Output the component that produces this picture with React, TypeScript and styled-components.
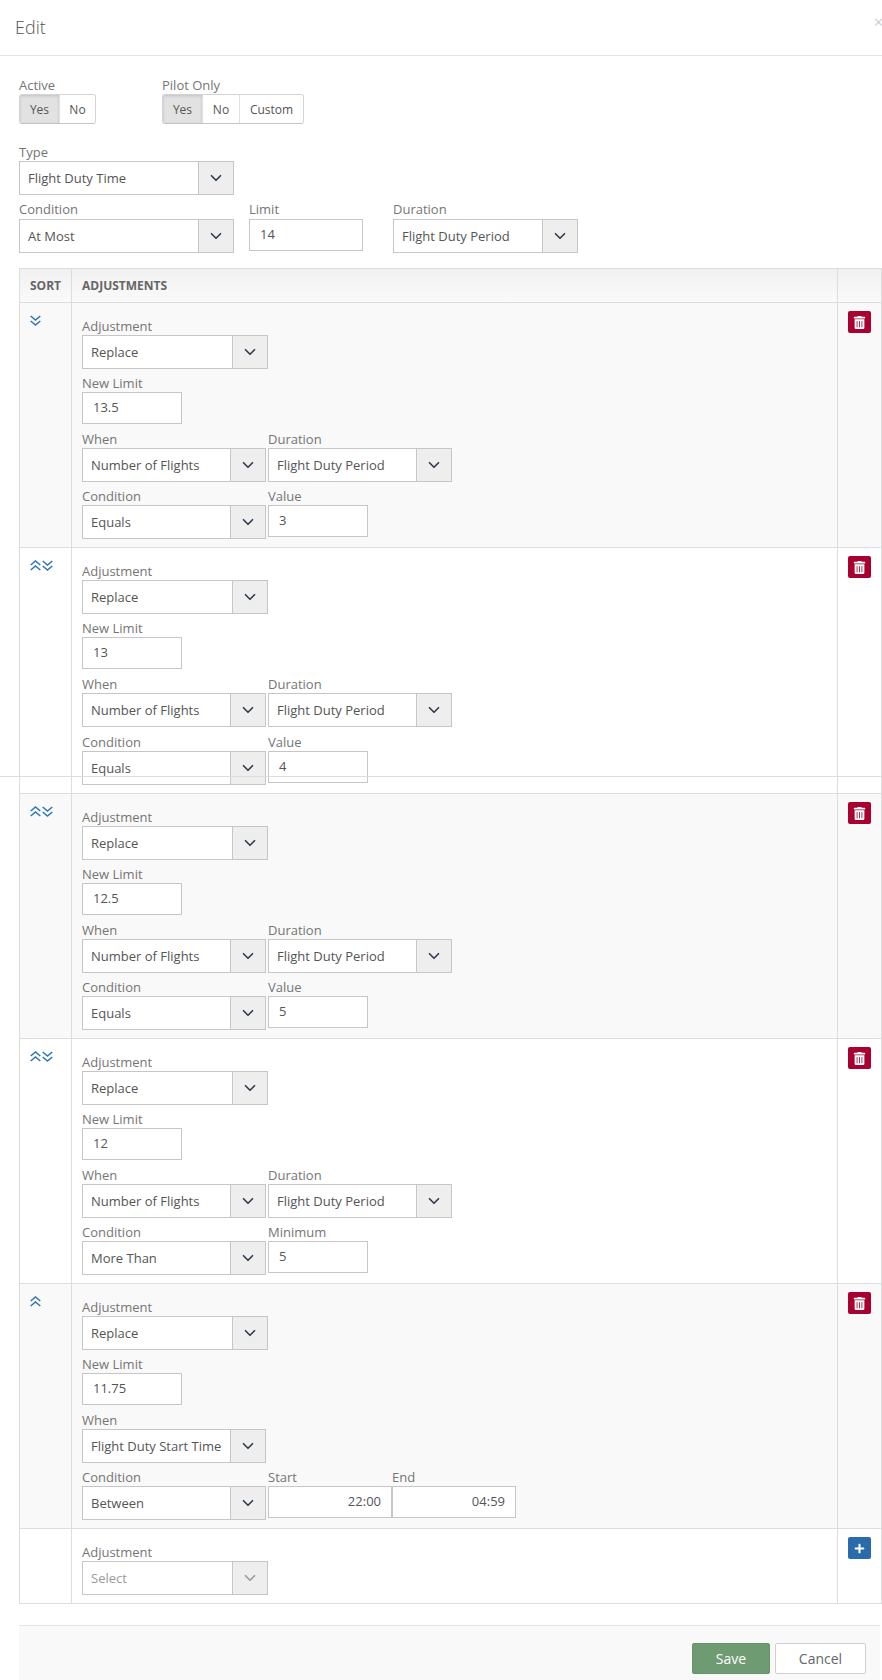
import React from "react";
import styled, { createGlobalStyle } from "styled-components";
import { ChevronDown } from "lucide-react";
import { FaPlus, FaTrashAlt } from "react-icons/fa";

const GlobalStyle = createGlobalStyle`
  html, body {
    margin: 0;
    padding: 0;
    background: #fff;
  }
  body {
    font-family: "Open Sans", "Liberation Sans", sans-serif;
    font-size: 13px;
    color: #555;
  }
  * {
    box-sizing: border-box;
  }
`;

// Every adjustment row in the table is described here
type Extra = { label: string; value: string };
type Adjustment = {
  limit: string;
  when: string;
  duration?: boolean;
  condition: string;
  extras: Extra[];
  up: boolean;
  down: boolean;
  timeInputs?: boolean;
  tall?: boolean;
};

const adjustments: Adjustment[] = [
  { limit: "13.5", when: "Number of Flights", duration: true, condition: "Equals", extras: [{ label: "Value", value: "3" }], up: false, down: true },
  { limit: "13", when: "Number of Flights", duration: true, condition: "Equals", extras: [{ label: "Value", value: "4" }], up: true, down: true, tall: true },
  { limit: "12.5", when: "Number of Flights", duration: true, condition: "Equals", extras: [{ label: "Value", value: "5" }], up: true, down: true },
  { limit: "12", when: "Number of Flights", duration: true, condition: "More Than", extras: [{ label: "Minimum", value: "5" }], up: true, down: true },
  {
    limit: "11.75",
    when: "Flight Duty Start Time",
    condition: "Between",
    extras: [
      { label: "Start", value: "22:00" },
      { label: "End", value: "04:59" },
    ],
    up: true,
    down: false,
    timeInputs: true,
  },
];

const SortArrow = ({ up }: { up?: boolean }) => (
  <svg width="11" height="11" viewBox="0 0 11 11" fill="none" stroke="currentColor" strokeWidth="1.5">
    {up ? (
      <path d="M.7 5 5.5 1l4.8 4M.7 10l4.8-4 4.8 4" />
    ) : (
      <path d="M.7 1l4.8 4 4.8-4M.7 6l4.8 4 4.8-4" />
    )}
  </svg>
);

const SelectBox = ({ width, value, muted }: { width: number; value: string; muted?: boolean }) => (
  <Select $width={width} $muted={muted}>
    <SelectValue>{value}</SelectValue>
    <SelectAddon>
      <ChevronDown size={18} strokeWidth={2.2} color={muted ? "#999" : "#2f3a4a"} />
    </SelectAddon>
  </Select>
);

const App = () => {
  return (
    <Page>
      <GlobalStyle />
      <SeamLine />
      <Header>
        <Title>Edit</Title>
        <Close>×</Close>
      </Header>

      <Form>
        <TogglesRow>
          <Field $gapAfter={66}>
            <Label>Active</Label>
            <ToggleGroup>
              <Toggle $active $width={39}>Yes</Toggle>
              <Toggle $width={36}>No</Toggle>
            </ToggleGroup>
          </Field>
          <Field>
            <Label>Pilot Only</Label>
            <ToggleGroup>
              <Toggle $active $width={39}>Yes</Toggle>
              <Toggle $width={37}>No</Toggle>
              <Toggle $width={64}>Custom</Toggle>
            </ToggleGroup>
          </Field>
        </TogglesRow>

        <FieldRow>
          <Field>
            <Label>Type</Label>
            <SelectBox width={215} value="Flight Duty Time" />
          </Field>
        </FieldRow>

        <ConditionRow>
          <Field $gapAfter={15}>
            <Label>Condition</Label>
            <SelectBox width={215} value="At Most" />
          </Field>
          <Field $gapAfter={30}>
            <Label>Limit</Label>
            <TextInput $width={114}>14</TextInput>
          </Field>
          <Field>
            <Label>Duration</Label>
            <SelectBox width={185} value="Flight Duty Period" />
          </Field>
        </ConditionRow>
      </Form>

      <Table>
        <HeadCell>SORT</HeadCell>
        <HeadCell>ADJUSTMENTS</HeadCell>
        <HeadCell />

        {adjustments.map((item, index) => (
          <React.Fragment key={item.limit}>
            <SortCell $striped={index % 2 === 0}>
              {item.up && <SortArrow up />}
              {item.down && <SortArrow />}
            </SortCell>
            <BodyCell $striped={index % 2 === 0}>
              <FieldRow>
                <Field>
                  <Label>Adjustment</Label>
                  <SelectBox width={186} value="Replace" />
                </Field>
              </FieldRow>
              <FieldRow>
                <Field>
                  <Label>New Limit</Label>
                  <TextInput $width={100}>{item.limit}</TextInput>
                </Field>
              </FieldRow>
              <FieldRow>
                <Field $gapAfter={2}>
                  <Label>When</Label>
                  <SelectBox width={184} value={item.when} />
                </Field>
                {item.duration && (
                  <Field>
                    <Label>Duration</Label>
                    <SelectBox width={184} value="Flight Duty Period" />
                  </Field>
                )}
              </FieldRow>
              <LastFieldRow $tall={item.tall}>
                <Field $gapAfter={2}>
                  <Label>Condition</Label>
                  <SelectBox width={184} value={item.condition} />
                </Field>
                {item.extras.map((extra) => (
                  <Field key={extra.label}>
                    <Label>{extra.label}</Label>
                    <TextInput $width={item.timeInputs ? 124 : 100} $right={item.timeInputs}>
                      {extra.value}
                    </TextInput>
                  </Field>
                ))}
              </LastFieldRow>
            </BodyCell>
            <ActionCell $striped={index % 2 === 0}>
              <IconButton $color="#a80030">
                <FaTrashAlt size={13} />
              </IconButton>
            </ActionCell>
          </React.Fragment>
        ))}

        <SortCell />
        <BodyCell>
          <FieldRow>
            <Field>
              <Label>Adjustment</Label>
              <SelectBox width={186} value="Select" muted />
            </Field>
          </FieldRow>
        </BodyCell>
        <ActionCell>
          <IconButton $color="#2a6cab">
            <FaPlus size={11} />
          </IconButton>
        </ActionCell>
      </Table>

      <Footer>
        <SaveButton>Save</SaveButton>
        <CancelButton>Cancel</CancelButton>
      </Footer>
    </Page>
  );
};

const Page = styled.div`
  position: relative;
  width: 882px;
  height: 1680px;
  overflow: hidden;
  background: #fff;
`;

// 1px line that runs over the second row, from the stitched capture
const SeamLine = styled.div`
  position: absolute;
  left: 0;
  right: 0;
  top: 776px;
  height: 1px;
  background: #ddd;
`;

const Header = styled.div`
  display: flex;
  align-items: flex-start;
  justify-content: space-between;
  height: 56px;
  padding-left: 15px;
  border-bottom: 1px solid #e5e5e5;
`;

const Title = styled.h4`
  margin: 0;
  padding-top: 15px;
  font-size: 18px;
  font-weight: 300;
  line-height: 24px;
  color: #555;
`;

const Close = styled.span`
  width: 8px;
  margin-top: 11px;
  font-size: 16px;
  line-height: 22px;
  color: #ccc;
  overflow: hidden;
`;

const Form = styled.div`
  padding: 15px 0 15px 19px;
`;

const TogglesRow = styled.div`
  display: flex;
  margin-bottom: 14px;
`;

const FieldRow = styled.div`
  display: flex;
  align-items: flex-start;
`;

const LastFieldRow = styled(FieldRow)<{ $tall?: boolean }>`
  margin-top: ${(p) => (p.$tall ? 1 : 0)}px;
`;

const Field = styled.div<{ $gapAfter?: number }>`
  display: flex;
  flex-direction: column;
  margin-right: ${(p) => p.$gapAfter ?? 0}px;
`;

const Label = styled.label`
  display: block;
  height: 23px;
  padding-top: 5px;
  font-size: 13px;
  line-height: 18px;
  color: #757575;
`;

const ConditionRow = styled(FieldRow)`
  ${Label} {
    height: 24px;
  }
`;

const ToggleGroup = styled.div`
  display: flex;
  height: 30px;
  border: 1px solid #d4d4d4;
  border-bottom-color: #c4c4c4;
  border-radius: 3px;
  background: #fff;
  overflow: hidden;
`;

const Toggle = styled.span<{ $active?: boolean; $width: number }>`
  display: flex;
  align-items: center;
  justify-content: center;
  width: ${(p) => p.$width}px;
  font-size: 12px;
  color: #555;
  background: ${(p) => (p.$active ? "#e2e2e2" : "#fff")};
  box-shadow: ${(p) => (p.$active ? "inset 0 1px 3px rgba(0, 0, 0, 0.15)" : "none")};
  & + & {
    border-left: 1px solid #e0e0e0;
  }
`;

const Select = styled.div<{ $width: number; $muted?: boolean }>`
  display: flex;
  width: ${(p) => p.$width}px;
  height: 34px;
  border: 1px solid #c6c6c6;
  background: #fff;
  color: ${(p) => (p.$muted ? "#9a9a9a" : "#555")};
`;

const SelectValue = styled.div`
  flex: 1;
  padding-left: 8px;
  font-size: 13px;
  line-height: 32px;
  white-space: nowrap;
  overflow: hidden;
`;

const SelectAddon = styled.div`
  display: flex;
  align-items: center;
  justify-content: center;
  width: 35px;
  background: #eee;
  border-left: 1px solid #c6c6c6;
`;

const TextInput = styled.div<{ $width: number; $right?: boolean }>`
  width: ${(p) => p.$width}px;
  height: 32px;
  margin-bottom: 1px;
  padding: 0 10px;
  border: 1px solid #c6c6c6;
  background: #fff;
  font-size: 13px;
  line-height: 29px;
  color: #555;
  text-align: ${(p) => (p.$right ? "right" : "left")};
`;

const Table = styled.div`
  display: grid;
  grid-template-columns: 52px 1fr 44px;
  width: 863px;
  margin-left: 19px;
  border-left: 1px solid #ddd;
  border-top: 1px solid #ddd;
`;

const HeadCell = styled.div`
  height: 34px;
  padding: 0 10px;
  border-right: 1px solid #ddd;
  border-bottom: 1px solid #ddd;
  background: linear-gradient(#f1f1f1, #fafafa);
  font-size: 12px;
  font-weight: 700;
  line-height: 34px;
  color: #666;
`;

const Cell = styled.div<{ $striped?: boolean }>`
  border-right: 1px solid #ddd;
  border-bottom: 1px solid #ddd;
  background: ${(p) => (p.$striped ? "#f9f9f9" : "#fff")};
`;

const SortCell = styled(Cell)`
  display: flex;
  align-items: flex-start;
  gap: 1px;
  padding: 12px 0 0 10px;
  color: #2f75b5;
  svg {
    display: block;
  }
`;

const BodyCell = styled(Cell)`
  padding: 9px 0 8px 10px;
`;

const ActionCell = styled(Cell)`
  padding: 8px 0 0 10px;
`;

const IconButton = styled.span<{ $color: string }>`
  display: flex;
  align-items: center;
  justify-content: center;
  width: 23px;
  height: 22px;
  border-radius: 2px;
  background: ${(p) => p.$color};
  color: #fff;
`;

const Footer = styled.div`
  display: flex;
  justify-content: flex-end;
  gap: 5px;
  width: 861px;
  height: 56px;
  margin: 21px 0 0 19px;
  padding: 17px 14px 0 0;
  border-top: 1px solid #e5e5e5;
  background: #f9f9f9;
`;

const FooterButton = styled.span`
  display: flex;
  align-items: center;
  justify-content: center;
  height: 31px;
  border-radius: 2px;
  font-size: 14px;
`;

const SaveButton = styled(FooterButton)`
  width: 78px;
  background: #6f9b73;
  border: 1px solid #68926c;
  color: #fff;
`;

const CancelButton = styled(FooterButton)`
  width: 91px;
  background: #fff;
  border: 1px solid #d0d0d0;
  color: #666;
`;

export default App;
